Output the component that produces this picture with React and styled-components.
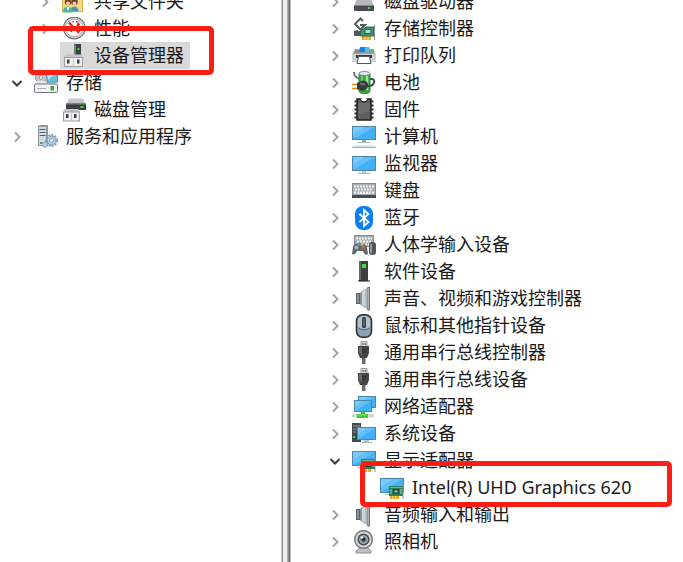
import React from "react";
import styled, { createGlobalStyle } from "styled-components";

const GlobalStyle = createGlobalStyle`
  * { box-sizing: border-box; }
  body {
    margin: 0;
    background: #fff;
    color: #1a1a1a;
    font-family: "Noto Sans", "Noto Sans CJK SC", sans-serif;
    font-size: 18px;
  }
`;

const Window = styled.main`
  display: grid;
  grid-template-columns: 281fr 10px 392fr;
  height: 100vh;
  overflow: hidden;
`;

const Pane = styled.section`
  min-width: 0;
`;

const Splitter = styled.div`
  background: linear-gradient(
    to right,
    #c4c9cd 0 1px,
    #8d949a 1px 2px,
    #f0f0f0 2px 6px,
    #b0b0b0 6px 7px,
    #8c8c8c 7px 8px,
    #6b6b6b 8px 9px,
    #b5b5b5 9px 10px
  );
`;

const Tree = styled.ul`
  list-style: none;
  margin: -12px 0 0;
  padding: 0 0 0 ${(p) => p.$inset}px;
`;

const Row = styled.li`
  display: flex;
  align-items: center;
  gap: 7px;
  height: 27px;
  padding-left: ${(p) => p.$depth * 28}px;
`;

const Toggle = styled.button`
  display: flex;
  align-items: center;
  justify-content: center;
  width: 16px;
  height: 16px;
  padding: 0;
  border: 0;
  background: none;
  color: ${(p) => (p.$open ? "#3c3c3c" : "#a3a3a3")};
`;

const ToggleSpace = styled.span`
  width: 16px;
`;

const Item = styled.button`
  position: relative;
  display: flex;
  align-items: center;
  gap: 8px;
  height: 27px;
  padding: 0 6px 0 2px;
  border: 0;
  background: ${(p) => (p.$selected ? "#d9d9d9" : "transparent")};
  color: inherit;
  font: inherit;
  line-height: 27px;
  white-space: nowrap;
`;

const Marker = styled.span`
  position: absolute;
  z-index: 1;
  inset: ${(p) => p.$inset};
  border: 5px solid #fe1e14;
  border-radius: 5px;
  pointer-events: none;
`;

const Glyph = styled.svg`
  display: block;
  flex: none;
  width: 24px;
  height: 24px;
`;

const Screen = ({ x, y, w, h }) => (
  <>
    <rect x={x} y={y} width={w} height={h} fill="#4e86a8" />
    <rect x={x + 1} y={y + 1} width={w - 2} height={h - 2} fill="#43b0f5" />
    <path d={`M${x + 1} ${y + 1}h${w - 2}L${x + 1} ${y + h - 1}z`} fill="#62bff9" />
    <path d={`M${x + 1} ${y + 1}h${w * 0.5}L${x + 1} ${y + h * 0.6}z`} fill="#79cafb" />
  </>
);

const Card = ({ x, y }) => (
  <>
    <path d={`M${x + 1} ${y + 9}h9v4h-9z`} fill="#eda91f" />
    <path d={`M${x + 3.5} ${y + 10}v3M${x + 6.5} ${y + 10}v3`} stroke="#fff1b8" strokeWidth=".7" />
    <rect x={x} y={y} width="14" height="10" fill="#2c7f58" />
    <rect x={x + 1} y={y + 1} width="12" height="1" fill="#6fb894" />
    <rect x={x + 4} y={y + 3} width="6" height="5" fill="#23493a" />
    <rect x={x + 5.5} y={y + 4.5} width="3" height="2" fill="#9fcdb5" />
    <path d={`M${x + 2} ${y + 3}v5M${x + 12} ${y + 3}v5`} stroke="#93d0af" />
    <path d={`M${x + 14} ${y - 1}v14`} stroke="#8b9696" />
  </>
);

const Keys = ({ x, y, w, h }) => (
  <>
    <rect x={x} y={y} width={w} height={h} fill="#858e93" />
    <rect x={x + 1} y={y + 1} width={w - 2} height={h - 2} fill="#a9b1b6" />
    <path
      d={`M${x + 2} ${y + 3.5}h${w - 4}M${x + 3} ${y + 6.5}h${w - 6}M${x + 2} ${y + 9.5}h${w - 4}`}
      stroke="#eef1f3"
      strokeWidth="2"
      strokeDasharray="2 1"
    />
  </>
);

const Speaker = () => (
  <>
    <path d="M4 6h4v11H4z" fill="#586169" />
    <path d="M5 7h2v9H5z" fill="#89939a" />
    <path d="M8 6l8-6v23.500l-8-6.500z" fill="#b4bcc1" />
    <path d="M8 6l4-3v17l-4-3z" fill="#87929a" />
    <path d="M10 5l3-2v17l-3-2z" fill="#cfd5d9" />
    <path d="M15.500 0H18v23.500h-2.500z" fill="#6b747b" />
    <path d="M16 1h1v21h-1z" fill="#a8b0b5" />
  </>
);

const Usb = () => (
  <>
    <path d="M9 .5h6V6H9z" fill="#d8d8d8" stroke="#999" />
    <path d="M10.500 2h1v2h-1zM12.800 2h1v2h-1z" fill="#555" />
    <path d="M6 5h11v7l-2 5H8l-2-5z" fill="#444" />
    <path d="M7 6h3v9l-3-4z" fill="#686868" />
    <path d="M10 8.500h4M10 11h4" stroke="#2b2b2b" />
    <path d="M10 17h3.500v6H10z" fill="#6a6a6a" />
  </>
);

const PortBox = ({ x, y, w }) => (
  <>
    <path d={`M${x + 1.5} ${y}h${w - 3}l1.500 4H${x}z`} fill="#c3c6c8" />
    <rect x={x + 0.5} y={y + 3} width={w - 1} height="9" fill="#eceeef" stroke="#9a9fa2" />
    <path
      d={`M${x + 3} ${y + 5}h2.500v4h-2.500zM${x + w - 6} ${y + 5}h2.500v4h-2.500z`}
      fill="#3c4145"
    />
    <path d={`M${x + w / 2} ${y + 4}v8`} stroke="#c0c4c6" />
  </>
);

const icons = {
  share: (
    <>
      <path d="M0 2h9l2 3h10v17H0z" fill="#dcae4c" />
      <path d="M1 6h19v15H1z" fill="#f5d98a" />
      <circle cx="6" cy="12" r="3.300" fill="#754821" />
      <circle cx="6" cy="13.500" r="2" fill="#efc6a0" />
      <circle cx="12.500" cy="12" r="3.300" fill="#6d421e" />
      <circle cx="12.500" cy="13.500" r="2" fill="#f0c49b" />
      <path d="M8 21.500c0-3 2-5 4.500-5s4 2 4 5z" fill="#4799b0" />
      <path d="M1 22.500c0-4 2-6 5-6s4.500 2 4.500 6z" fill="#4fb58c" />
      <path d="M4.500 17L6 21l1.500-4z" fill="#fff" />
    </>
  ),
  gauge: (
    <>
      <circle cx="12.300" cy="11" r="10.800" fill="#e9e8e7" stroke="#77726f" strokeWidth="1.200" />
      <circle cx="12.300" cy="11" r="8.800" fill="#fff" stroke="#a9a4a1" />
      <path d="M5.500 11h2M7 6l1 1.500M11 4v1.500M15 4l-.5 1.500M18 7l-1.500 1" stroke="#444" strokeWidth="1.200" />
      <path d="M7 5.500L17 16" stroke="#e21d1d" strokeWidth="2" />
      <path d="M9 15l1-3M15 10l1-3 1.500 8" fill="none" stroke="#e52525" strokeWidth="1.800" />
    </>
  ),
  manager: (
    <>
      <path d="M12 0h7v12h-7z" fill="#3a4043" />
      <path d="M12 0l2 1v11h-2z" fill="#777d80" />
      <path d="M15.500 4h2v2h-2z" fill="#31db38" />
      <PortBox x={2} y={10.5} w={19} />
    </>
  ),
  storage: (
    <>
      <path d="M2 13L5 5h14l3 8z" fill="#c9ced1" />
      <circle cx="7" cy="6.500" r="5.500" fill="#c4cbcf" stroke="#8a9298" />
      <circle cx="7" cy="6.500" r="1.800" fill="#f4f6f7" stroke="#8a9298" />
      <path d="M12 2h12v9.500H13z" fill="#3f95b9" />
      <path d="M13 3h10v7.500h-9z" fill="#63c2e8" />
      <path d="M13 3h8l-7 6z" fill="#b5e5f5" />
      <path d="M3 10h8l2 3H1z" fill="#e3e6e8" />
      <rect x=".5" y="13" width="23" height="8.500" rx="1" fill="#f2f4f5" stroke="#6e767b" />
      <path d="M3 17.500h9" stroke="#a9b0b4" />
      <path d="M16.500 15h3.500v4.500h-3.500z" fill="#40a930" />
    </>
  ),
  diskmgmt: (
    <>
      <path d="M7 .5h14l3 6H4z" fill="#c4c8ca" />
      <path d="M4 5.500h20V12H4z" fill="#3b4043" />
      <path d="M4 5.500h20v1H4z" fill="#747b7f" />
      <path d="M18.500 8h3v2h-3z" fill="#35db43" />
      <PortBox x={1} y={11} w={17} />
    </>
  ),
  services: (
    <>
      <path d="M4 1l2-1h8v21H4z" fill="#909ba2" />
      <path d="M4.500 1.500h8v19h-8z" fill="#d3dade" stroke="#8b969d" />
      <path d="M5.500 4.500h6M5.500 7.500h6M5.500 10.500h6" stroke="#536069" />
      <path d="M6 17h2v2H6z" fill="#32aa50" />
      <circle cx="17.500" cy="15.500" r="5.500" fill="none" stroke="#7ba0bb" strokeWidth="2" strokeDasharray="2 1.140" />
      <circle cx="17.500" cy="15.500" r="4.300" fill="#b7d1e4" stroke="#7ba0bb" />
      <circle cx="17.500" cy="15.500" r="2" fill="#f5f9fc" stroke="#7ba0bb" />
      <circle cx="11" cy="19.500" r="2.600" fill="#b7d1e4" stroke="#7ba0bb" strokeWidth="1.500" strokeDasharray="2 .8" />
    </>
  ),
  disk: (
    <>
      <path d="M5 9h14l3 7H2z" fill="#b6b9bb" />
      <path d="M2 15h20v5q0 1-1 1H3q-1 0-1-1z" fill="#484d4f" />
      <path d="M2 15h20v1H2z" fill="#858a8d" />
      <path d="M16 17h2v2h-2z" fill="#43df49" />
    </>
  ),
  controller: (
    <>
      <path d="M11 4L8.500 1.500 3 7l5.500 5.500L13 8H8" fill="none" stroke="#565c5d" strokeWidth="2" />
      <path d="M2 14l3-1 5 2v4H2z" fill="#52595a" />
      <path d="M10 19h9v4h-9z" fill="#ee9e19" />
      <path d="M13 19v4M16 19v4" stroke="#fff1b0" strokeWidth=".8" />
      <path d="M8.500 14l5.500-4h8v9H8.500z" fill="#3b9570" stroke="#2b6a50" />
      <path d="M13 12.500h6v4h-6z" fill="#b9d9c9" stroke="#2d5f4c" />
      <path d="M22.500 8v15" stroke="#858e8e" />
    </>
  ),
  printer: (
    <>
      <path d="M3 5h18l3 6v7H0v-7z" fill="#b8bec2" />
      <path d="M3 5.500h18l1.500 4h-21z" fill="#8a9297" />
      <path d="M0 10h24v8H0z" fill="#cfd3d6" />
      <path d="M4 11h16v3H4z" fill="#353b40" />
      <path d="M8 3h9l1 5H7z" fill="#1583e0" />
      <path d="M13 3h4l1 5h-5z" fill="#4fc3f0" />
      <path d="M19.500 5.500h2.500v2h-2.500z" fill="#2ed83d" />
      <path d="M6.500 12.500h11l1.500 7H5z" fill="#fff" stroke="#50585d" />
    </>
  ),
  battery: (
    <>
      <path d="M7 3v17c0 3.500 11 3.500 11 0V3c-2 1-9 1-11 0z" fill="#35a83f" stroke="#278344" />
      <path d="M15 5v14" stroke="#a4e39f" strokeWidth="2.500" />
      <path d="M10 5v6" stroke="#69cc66" strokeWidth="2" />
      <ellipse cx="12.500" cy="2.500" rx="5.500" ry="2" fill="#e4e7f1" stroke="#777e91" />
      <path d="M2 1c0 4 2 5 5 7" fill="none" stroke="#6a6f72" strokeWidth="1.800" />
      <path d="M15 15c8 1 9-7 5-7h-2" fill="none" stroke="#454a4d" strokeWidth="2" />
      <path d="M0 13.500h6M0 17.500h6" stroke="#d09116" strokeWidth="1.500" />
      <path d="M5 11.500h2l3-2c5 0 7 3 6 6s-4 5-7 4l-2-1H5z" fill="#363b3e" />
      <path d="M8 12.500l5 1" stroke="#7d8486" strokeWidth="1.500" />
    </>
  ),
  firmware: (
    <>
      <path d="M2.500 3.500h19M2.500 7.500h19M2.500 11.500h19M2.500 15.500h19M2.500 19.500h19" stroke="#303030" strokeWidth="2" />
      <path d="M5 1h4c0 3.500 6 3.500 6 0h4v21H5z" fill="#5d5d5d" stroke="#1f1f1f" strokeWidth="1.500" />
      <path d="M6 5h12v8L6 17z" fill="#6b6b6b" />
      <path d="M9 1h6c0 3-6 3-6 0z" fill="#fff" />
    </>
  ),
  computer: (
    <>
      <Screen x={0} y={1} w={24} h={14} />
      <path d="M10 15h4v2h-4z" fill="#9aabb5" />
      <path d="M6 17.500h12" stroke="#a8b6be" />
      <path d="M2 20h20l2 2.500H0z" fill="#dbe4e9" />
      <path d="M0 22.500h24" stroke="#9fb1bc" />
    </>
  ),
  monitor: (
    <>
      <Screen x={0} y={4} w={24} h={15} />
      <path d="M10 19h4v2h-4z" fill="#c4cdd2" />
      <path d="M6 21.500h12" stroke="#a4b3bc" />
    </>
  ),
  keyboard: (
    <>
      <Keys x={0} y={4} w={24} h={13} />
      <path d="M0 16h24v3H0z" fill="#454d52" />
      <path d="M7 14.500h10" stroke="#f1f3f4" />
    </>
  ),
  bluetooth: (
    <>
      <rect x="3" y="0" width="18" height="24" rx="8" fill="#0a80f5" />
      <path d="M7.500 8l9 8-4.500 4V4l4.500 4-9 8" fill="none" stroke="#fff" strokeWidth="1.800" />
    </>
  ),
  hid: (
    <>
      <Keys x={2} y={2} w={20} h={12} />
      <path d="M1 14c1-4 4-4 7-3 3-1 6 0 7 3l1 7c-2 2-4 0-5-3H5c-1 3-3 4-5 3z" fill="#636b72" />
      <circle cx="4.500" cy="14.500" r="2" fill="#a8b1b8" />
      <path d="M6 10h3v3H6z" fill="#3a9bdc" />
      <circle cx="11.500" cy="14" r="1.500" fill="#ef5b2e" />
      <circle cx="10" cy="11.500" r="1.200" fill="#efc42e" />
      <rect x="17" y="9" width="7" height="13" rx="3" fill="#4f565b" />
      <path d="M19 11v9" stroke="#a8b0b5" strokeWidth="1.500" />
    </>
  ),
  software: (
    <>
      <path d="M7 1h9v20H7z" fill="#3c4042" />
      <path d="M7 1l2 1v18H7z" fill="#646a6c" />
      <path d="M10 4h4v4h-4z" fill="#3ce336" />
      <path d="M6 20h12v2H6z" fill="#898f92" />
      <path d="M7 20h9v1H7z" fill="#292d2f" />
    </>
  ),
  speaker: <Speaker />,
  mouse: (
    <>
      <rect x="4.500" y=".8" width="15" height="22.400" rx="6" fill="#8ea3b5" stroke="#292d31" strokeWidth="1.500" />
      <path d="M6 6c1-3 3-4 6-4s5 1 6 4v7c-3 2-9 2-12 0z" fill="#b3c2cd" />
      <rect x="10" y="3" width="4" height="11" rx="1.500" fill="#3d4246" />
      <path d="M12 5v7" stroke="#7b8488" />
      <path d="M5.500 13.500c3 3 10 3 13 0" fill="none" stroke="#5c6b77" />
    </>
  ),
  usb: <Usb />,
  network: (
    <>
      <Screen x={6} y={1} w={18} h={12} />
      <Screen x={2} y={5} w={18} h={12} />
      <path d="M0 19h22v3.500H0z" fill="#d3d9d8" />
      <path d="M9 17h4v2h3v4H5v-4h4z" fill="#42c83c" />
      <path d="M6 20h9" stroke="#77e176" />
    </>
  ),
  system: (
    <>
      <path d="M0 1h9v19H0z" fill="#434b50" />
      <path d="M1 4h7M1 7h7M1 10h3" stroke="#8c979e" />
      <path d="M1 14h2v2H1z" fill="#42d544" />
      <Screen x={5} y={5} w={19} h={13} />
      <path d="M12 18h5v2h-5z" fill="#b8c3ca" />
      <path d="M10 20.500h10" stroke="#a6b4bd" />
    </>
  ),
  display: (
    <>
      <Screen x={0} y={2} w={24} h={15} />
      <path d="M5 18.500h5" stroke="#b4c2cb" />
      <Card x={9} y={10} />
    </>
  ),
  camera: (
    <>
      <path d="M8 18h8l3 3v2H4v-2z" fill="#c1c4c6" stroke="#8a8e91" />
      <circle cx="11.500" cy="9.500" r="8.800" fill="#d6d8d9" stroke="#75797b" strokeWidth="1.500" />
      <circle cx="11.500" cy="9.500" r="6" fill="#43494c" />
      <circle cx="11.500" cy="9.500" r="4" fill="#7c8b94" stroke="#b3bdc3" />
      <circle cx="11.500" cy="9.500" r="2" fill="#283138" />
      <circle cx="10" cy="7.500" r="1.200" fill="#edf3f6" />
    </>
  ),
};

const consoleTree = [
  { label: "共享文件夹", icon: "share", depth: 1, toggle: "closed" },
  { label: "性能", icon: "gauge", depth: 1, toggle: "closed" },
  { label: "设备管理器", icon: "manager", depth: 1, selected: true, marker: "-16px -24px -6px -32px" },
  { label: "存储", icon: "storage", depth: 0, toggle: "open" },
  { label: "磁盘管理", icon: "diskmgmt", depth: 1 },
  { label: "服务和应用程序", icon: "services", depth: 0, toggle: "closed" },
];

const deviceTree = [
  { label: "磁盘驱动器", icon: "disk" },
  { label: "存储控制器", icon: "controller" },
  { label: "打印队列", icon: "printer" },
  { label: "电池", icon: "battery" },
  { label: "固件", icon: "firmware" },
  { label: "计算机", icon: "computer" },
  { label: "监视器", icon: "monitor" },
  { label: "键盘", icon: "keyboard" },
  { label: "蓝牙", icon: "bluetooth" },
  { label: "人体学输入设备", icon: "hid" },
  { label: "软件设备", icon: "software" },
  { label: "声音、视频和游戏控制器", icon: "speaker" },
  { label: "鼠标和其他指针设备", icon: "mouse" },
  { label: "通用串行总线控制器", icon: "usb" },
  { label: "通用串行总线设备", icon: "usb" },
  { label: "网络适配器", icon: "network" },
  { label: "系统设备", icon: "system" },
  { label: "显示适配器", icon: "display", toggle: "open" },
  { label: "Intel(R) UHD Graphics 620", icon: "display", depth: 1, toggle: null, marker: "-13px -35px -6px -18px" },
  { label: "音频输入和输出", icon: "speaker" },
  { label: "照相机", icon: "camera" },
].map((node) => ({ depth: 0, toggle: "closed", ...node }));

function TreeRow({ node }) {
  const open = node.toggle === "open";
  return (
    <Row $depth={node.depth}>
      {node.toggle ? (
        <Toggle $open={open} aria-expanded={open} aria-label={node.label}>
          <svg width="12" height="12" viewBox="0 0 12 12" fill="none" stroke="currentColor" strokeWidth="2">
            <path d={open ? "M1.500 4L6 8.500 10.500 4" : "M4 1.500L8.500 6 4 10.500"} />
          </svg>
        </Toggle>
      ) : (
        <ToggleSpace />
      )}
      <Item $selected={node.selected}>
        <Glyph viewBox="0 0 24 24" aria-hidden="true">{icons[node.icon]}</Glyph>
        {node.label}
        {node.marker && <Marker $inset={node.marker} />}
      </Item>
    </Row>
  );
}

export default function App() {
  return (
    <Window>
      <GlobalStyle />
      <Pane>
        <Tree $inset={9}>
          {consoleTree.map((node) => <TreeRow key={node.label} node={node} />)}
        </Tree>
      </Pane>
      <Splitter role="separator" aria-orientation="vertical" />
      <Pane>
        <Tree $inset={36}>
          {deviceTree.map((node) => <TreeRow key={node.label} node={node} />)}
        </Tree>
      </Pane>
    </Window>
  );
}
